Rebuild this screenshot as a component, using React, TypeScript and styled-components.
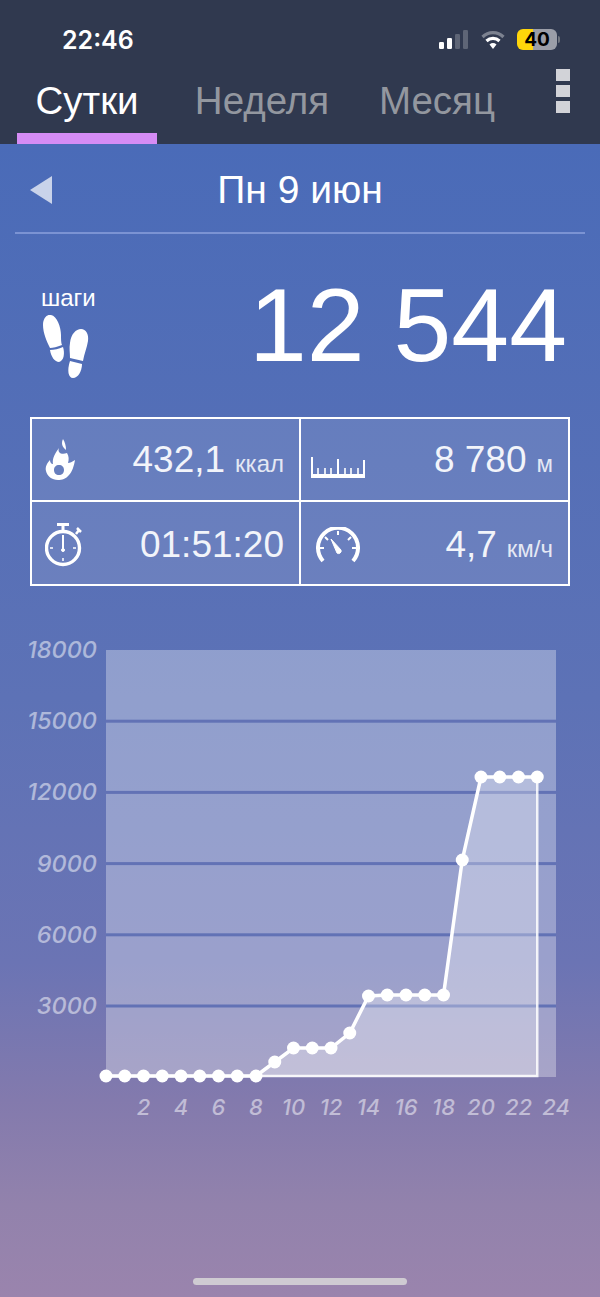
import React from "react";
import styled, { createGlobalStyle } from "styled-components";

const GlobalStyle = createGlobalStyle`
  html, body {
    margin: 0;
    padding: 0;
    background: #30394f;
  }
  * {
    box-sizing: border-box;
  }
`;

const Page = styled.div`
  position: relative;
  width: 600px;
  height: 1297px;
  display: flex;
  flex-direction: column;
  overflow: hidden;
  font-family: "Liberation Sans", Arial, sans-serif;
  color: #fff;
`;

const Header = styled.header`
  height: 144px;
  flex-shrink: 0;
  background: #30394f;
  display: flex;
  flex-direction: column;
`;

const StatusBar = styled.div`
  height: 68px;
  padding: 11px 40px 0 62px;
  display: flex;
  align-items: center;
  justify-content: space-between;
`;

const Clock = styled.span`
  font-family: Inter, sans-serif;
  font-size: 25px;
  font-weight: 600;
`;

const StatusIcons = styled.div`
  display: flex;
  align-items: center;
  gap: 12px;
`;

const TabBar = styled.nav`
  flex: 1;
  display: flex;
  padding-left: 17px;
  position: relative;
`;

const Tab = styled.div<{ $active?: boolean; $width: number }>`
  width: ${(p) => p.$width}px;
  height: 76px;
  padding-top: 11px;
  text-align: center;
  font-size: 38.5px;
  line-height: 44px;
  color: ${(p) => (p.$active ? "#fff" : "#93979f")};
  border-bottom: 11px solid ${(p) => (p.$active ? "#d58cf5" : "transparent")};
`;

const MenuDots = styled.div`
  position: absolute;
  right: 30px;
  top: 1px;
  display: flex;
  flex-direction: column;
  gap: 4px;
`;

const MenuDot = styled.span`
  width: 14px;
  height: 12px;
  background: #d2d3d8;
`;

const Body = styled.main`
  flex: 1;
  display: flex;
  flex-direction: column;
  background: linear-gradient(180deg, #4a6bb8 0%, #5d72b6 48%, #6b74b4 71%, #837aad 83%, #9282ac 92%, #9a84ad 100%);
`;

const DateRow = styled.div`
  height: 90px;
  margin: 0 15px;
  padding-top: 4px;
  border-bottom: 2px solid #7b93d3;
  display: flex;
  align-items: center;
  justify-content: center;
  position: relative;
  font-size: 39px;
`;

const BackArrow = styled.span`
  position: absolute;
  left: 15px;
  top: 32px;
  border-style: solid;
  border-width: 14px 22px 14px 0;
  border-color: transparent #c9d3ea transparent transparent;
`;

const StepsRow = styled.section`
  height: 183px;
  padding: 0 33px 0 41px;
  display: flex;
  justify-content: space-between;
`;

const StepsLabel = styled.div`
  padding-top: 52px;
  font-size: 24px;
  line-height: 24px;
`;

const StepsIcon = styled.svg`
  display: block;
  width: 48px;
  height: 64px;
  margin: 5px 0 0 2px;
`;

const StepsValue = styled.div`
  padding-top: 31px;
  font-size: 104px;
  line-height: 120px;
`;

const StatsGrid = styled.section`
  width: 540px;
  height: 169px;
  margin-left: 30px;
  border: 2px solid #fff;
  display: grid;
  grid-template-columns: 269px 1fr;
  grid-template-rows: 83px 1fr;
  background: rgba(255, 255, 255, 0.11);
`;

const StatCell = styled.div<{ $right?: boolean; $bottom?: boolean }>`
  display: flex;
  align-items: center;
  justify-content: space-between;
  padding: ${(p) => (p.$bottom ? 3 : 0)}px 15px 0 ${(p) => (p.$right ? 10 : 13)}px;
  border-right: ${(p) => (p.$right ? "none" : "2px solid #fff")};
  border-bottom: ${(p) => (p.$bottom ? "none" : "2px solid #fff")};
`;

const StatValue = styled.div`
  font-size: 37px;
  color: #f2f4fa;
  white-space: nowrap;
`;

const StatUnit = styled.span`
  font-size: 24px;
  margin-left: 10px;
  color: #e4e8f4;
`;

const RulerSvg = styled.svg`
  margin-top: 15px;
`;

const GaugeSvg = styled.svg`
  margin-left: 5px;
`;

const Chart = styled.svg`
  display: block;
  width: 600px;
  height: 577px;
`;

const AxisLabel = styled.text<{ $size: number }>`
  font-family: Inter, sans-serif;
  font-style: italic;
  font-weight: 500;
  font-size: ${(p) => p.$size}px;
  fill: rgba(255, 255, 255, 0.5);
`;

const HomeBar = styled.div`
  position: absolute;
  left: 193px;
  top: 1278px;
  width: 214px;
  height: 7px;
  border-radius: 4px;
  background: #cfcbd2;
`;

const Footprints = () => (
  <StepsIcon viewBox="8 5 48 64" fill="#fff">
    <path d="M8 15 C8 7 13 4 16 5 C22 6 26 17 26 25 C26 29 26 33 27 35 C22 37 18 38 15 38 C12 32 8 23 8 15 Z" />
    <path d="M15 40 C19 40 24 39 28 37 C30 43 29 51 24 52 C20 52 16 47 15 40 Z" />
    <path d="M35 33 C36 24 41 19 46 19 C51 19 54 24 53 31 C52 38 49 44 48 51 C44 50 39 49 35 48 C35 43 34 38 35 33 Z" />
    <path d="M35 51 C39 52 43 53 47 54 C47 61 43 68 38 68 C33 68 32 60 35 51 Z" />
  </StepsIcon>
);

const FlameIcon = () => (
  <svg width="32" height="43" viewBox="7 3 32 43" fill="#fff">
    <path d="M25 4 C23 8 24 12 28 15 C28 11 27 7 25 4 Z" />
    <path
      fillRule="evenodd"
      d="M21 13 C19 18 24 20 29 18 C31 21 31 25 30 28 C32 28 34 27 37 25 C36 31 34 37 31 40 C28 44 24 45 20 45 C14 45 9 41 8 36 C7 32 9 28 12 25 C12 27 13 29 15 29 C14 24 17 18 21 13 Z M21 30 C18 30 16 32 16 35 C16 38 18 40 21 40 C24 40 26 38 26 35 C26 32 24 30 21 30 Z"
    />
  </svg>
);

const RulerIcon = () => (
  <RulerSvg width="54" height="22" viewBox="0 0 54 22" stroke="#fff" fill="none">
    <path d="M1 1 V22 M53 4 V22 M27 3 V20" strokeWidth="2" />
    <path d="M0 20 H54" strokeWidth="4" />
    <path d="M7 12 V20 M14 12 V20 M20 12 V20 M34 12 V20 M40 12 V20 M47 12 V20" strokeWidth="1.6" />
  </RulerSvg>
);

const StopwatchIcon = () => (
  <svg width="38" height="44" viewBox="0 0 38 44" fill="none" stroke="#fff">
    <circle cx="18" cy="25" r="16.5" strokeWidth="3.4" />
    <path d="M12 1.5 H24 M18 2 V8" strokeWidth="3" />
    <path d="M32 5 L36 9 M31 11 L34 7" strokeWidth="2.5" />
    <path d="M18 12 V27" strokeWidth="2" />
    <circle cx="18" cy="27" r="1.5" fill="#fff" strokeWidth="1" />
    <path d="M8 25 H5 M31 25 H28 M18 35 V38" strokeWidth="1.5" />
  </svg>
);

const GaugeIcon = () => (
  <GaugeSvg width="44" height="36" viewBox="0 0 44 36" fill="none" stroke="#fff">
    <path d="M7 34 A20 20 0 1 1 37 34" strokeWidth="4" />
    <path d="M22 4 V8 M9 10 L12 13 M35 10 L32 13 M4 21 H8 M40 21 H36" strokeWidth="2" />
    <path d="M15 12 L25 23 A2.6 2.6 0 0 1 21 26 Z" fill="#fff" strokeWidth="1" strokeLinejoin="round" />
  </GaugeSvg>
);

const SignalIcon = () => (
  <svg width="30" height="19" viewBox="0 0 30 19">
    <rect x="0" y="12" width="5" height="7" rx="1.2" fill="#fff" />
    <rect x="8" y="8" width="5" height="11" rx="1.2" fill="#fff" />
    <rect x="16" y="4" width="5" height="15" rx="1.2" fill="#5e6576" />
    <rect x="24" y="0" width="5" height="19" rx="1.2" fill="#5e6576" />
  </svg>
);

const WifiIcon = () => (
  <svg width="24" height="19" viewBox="0 0 24 19" fill="none">
    <path d="M1.5 7 A15 15 0 0 1 22.5 7" stroke="#7c8290" strokeWidth="3.2" />
    <path d="M5.5 11 A9.5 9.5 0 0 1 18.5 11" stroke="#fff" strokeWidth="3.2" />
    <path d="M8.5 14.5 A5.5 5.5 0 0 1 15.5 14.5 L12 19 Z" fill="#fff" />
  </svg>
);

const Battery = styled.div`
  width: 40px;
  height: 21px;
  border-radius: 6px;
  background: linear-gradient(90deg, #ffd60a 0 40%, #9b9ea8 40% 100%);
  color: #000;
  font-family: Inter, sans-serif;
  font-size: 19px;
  font-weight: 700;
  line-height: 21px;
  text-align: center;
`;

const BatteryCap = styled.span`
  width: 2px;
  height: 7px;
  margin-left: -11px;
  border-radius: 0 2px 2px 0;
  background: #70757f;
`;

const tabs = [
  { label: "Сутки", width: 140, active: true },
  { label: "Неделя", width: 210 },
  { label: "Месяц", width: 140 },
];

const stats = [
  { icon: <FlameIcon />, value: "432,1", unit: "ккал" },
  { icon: <RulerIcon />, value: "8 780", unit: "м", right: true },
  { icon: <StopwatchIcon />, value: "01:51:20", bottom: true },
  { icon: <GaugeIcon />, value: "4,7", unit: "км/ч", right: true, bottom: true },
];

// chart coords are page y minus 586 (where the svg starts)
const CHART_Y = 586;
const TOP = 650 - CHART_Y;
const BOTTOM = 1077 - CHART_Y;
const STEP_X = 18.75;
const LEFT = 106;
const points = [
  1076, 1076, 1076, 1076, 1076, 1076, 1076, 1076, 1076, 1062, 1048, 1048, 1048, 1033, 996, 995, 995, 995, 995, 860, 777,
  777, 777, 777,
].map((y, i) => ({ x: LEFT + i * STEP_X, y: y - CHART_Y }));

const line = points.map((p) => `${p.x},${p.y}`).join(" ");
const lastX = points[points.length - 1].x;
const yLabels = [18000, 15000, 12000, 9000, 6000, 3000];
const xLabels = [2, 4, 6, 8, 10, 12, 14, 16, 18, 20, 22, 24];

const App = () => {
  return (
    <Page>
      <GlobalStyle />
      <Header>
        <StatusBar>
          <Clock>22:46</Clock>
          <StatusIcons>
            <SignalIcon />
            <WifiIcon />
            <Battery>40</Battery>
            <BatteryCap />
          </StatusIcons>
        </StatusBar>
        <TabBar>
          {tabs.map((t) => (
            <Tab key={t.label} $active={t.active} $width={t.width}>
              {t.label}
            </Tab>
          ))}
          <MenuDots>
            <MenuDot />
            <MenuDot />
            <MenuDot />
          </MenuDots>
        </TabBar>
      </Header>
      <Body>
        <DateRow>
          <BackArrow />
          Пн 9 июн
        </DateRow>
        <StepsRow>
          <StepsLabel>
            шаги
            <Footprints />
          </StepsLabel>
          <StepsValue>12 544</StepsValue>
        </StepsRow>
        <StatsGrid>
          {stats.map((s) => (
            <StatCell key={s.value} $right={s.right} $bottom={s.bottom}>
              {s.icon}
              <StatValue>
                {s.value}
                {s.unit && <StatUnit>{s.unit}</StatUnit>}
              </StatValue>
            </StatCell>
          ))}
        </StatsGrid>
        <Chart viewBox="0 0 600 577">
          <rect x={LEFT} y={TOP} width={450} height={BOTTOM - TOP} fill="rgba(255,255,255,0.32)" />
          {[1, 2, 3, 4, 5].map((n) => (
            <rect key={n} x={LEFT} y={TOP + n * 71.2 - 1.5} width={450} height={3} fill="#6272b5" />
          ))}
          <polygon points={`${line} ${lastX},${BOTTOM} ${LEFT},${BOTTOM}`} fill="rgba(255,255,255,0.3)" />
          <polyline
            points={`${lastX},${points[23].y} ${lastX},${BOTTOM - 1} ${LEFT},${BOTTOM - 1}`}
            fill="none"
            stroke="rgba(255,255,255,0.85)"
            strokeWidth="2.5"
          />
          <polyline points={line} fill="none" stroke="#fff" strokeWidth="3.5" />
          {points.map((p) => (
            <circle key={p.x} cx={p.x} cy={p.y} r="6.5" fill="#fff" />
          ))}
          {yLabels.map((v, i) => (
            <AxisLabel key={v} $size={23.5} x={97} y={TOP + i * 71.2 + 8} textAnchor="end">
              {v}
            </AxisLabel>
          ))}
          {xLabels.map((v) => (
            <AxisLabel key={v} $size={22} x={LEFT + v * STEP_X} y={BOTTOM + 38} textAnchor="middle">
              {v}
            </AxisLabel>
          ))}
        </Chart>
      </Body>
      <HomeBar />
    </Page>
  );
};

export default App;
